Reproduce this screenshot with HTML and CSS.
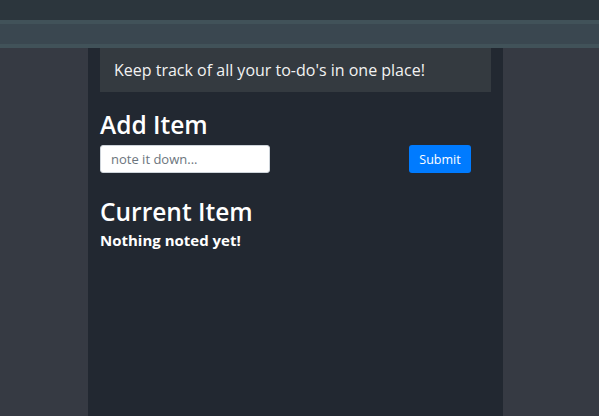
FILE: index.html
```html
<!DOCTYPE html>
<html>
<head>
<meta charset="utf-8">
<link rel="stylesheet" href="styles.css">
</head>
<body>
<header class="topbar"></header>
<div class="navstrip"></div>
<main class="column">
  <div class="jumbo"><p class="lead">Keep track of all your to-do's in one place!</p></div>
  <h2 class="title add-title">Add Item</h2>
  <form class="add-row">
    <input class="note-input" type="text" placeholder="note it down...">
    <button class="submit-btn" type="button">Submit</button>
  </form>
  <h2 class="title current-title">Current Item</h2>
  <h5 class="empty">Nothing noted yet!</h5>
</main>
</body>
</html>
```
FILE: styles.css
```css
html, body { margin: 0; padding: 0; }
body {
  background: #363a43;
  font-family: "Open Sans", "Noto Sans", sans-serif;
  color: #fff;
  height: 416px;
  overflow: hidden;
  display: flex;
  flex-direction: column;
}
.topbar { height: 20px; background: #2c363d; flex: none; }
.navstrip {
  height: 20px;
  background: #3a4750;
  border-top: 4px solid #415259;
  border-bottom: 4px solid #415259;
  flex: none;
}
.column {
  margin-left: 88px;
  width: 391px;
  padding: 0 12px;
  background: #222831;
  flex: 1;
}
.jumbo {
  background: #343a40;
  height: 44px;
  display: flex;
  align-items: center;
  padding-left: 14px;
}
.lead { margin: 0; font-size: 16px; color: #f2f2f2; }
.title { margin: 0; font-weight: 600; font-size: 24.5px; line-height: 28px; }
.add-title { margin-top: 19px; }
.add-row { display: flex; align-items: center; margin-top: 6px; margin-bottom: 0; }
.note-input {
  width: 170px;
  height: 28px;
  box-sizing: border-box;
  border: 1px solid #ced4da;
  border-radius: 3px;
  padding: 0 10px;
  font-family: inherit;
  font-size: 13px;
  color: #495057;
  background: #fff;
}
.note-input::placeholder { color: #6c757d; }
.submit-btn {
  margin-left: auto;
  margin-right: 20px;
  width: 62px;
  height: 28px;
  background: #007bff;
  border: none;
  border-radius: 3px;
  color: #fff;
  font-family: inherit;
  font-size: 12.5px;
}
.current-title { margin-top: 25px; }
.empty { margin: 4px 0 0; font-size: 15px; font-weight: 700; line-height: 20px; }
```
